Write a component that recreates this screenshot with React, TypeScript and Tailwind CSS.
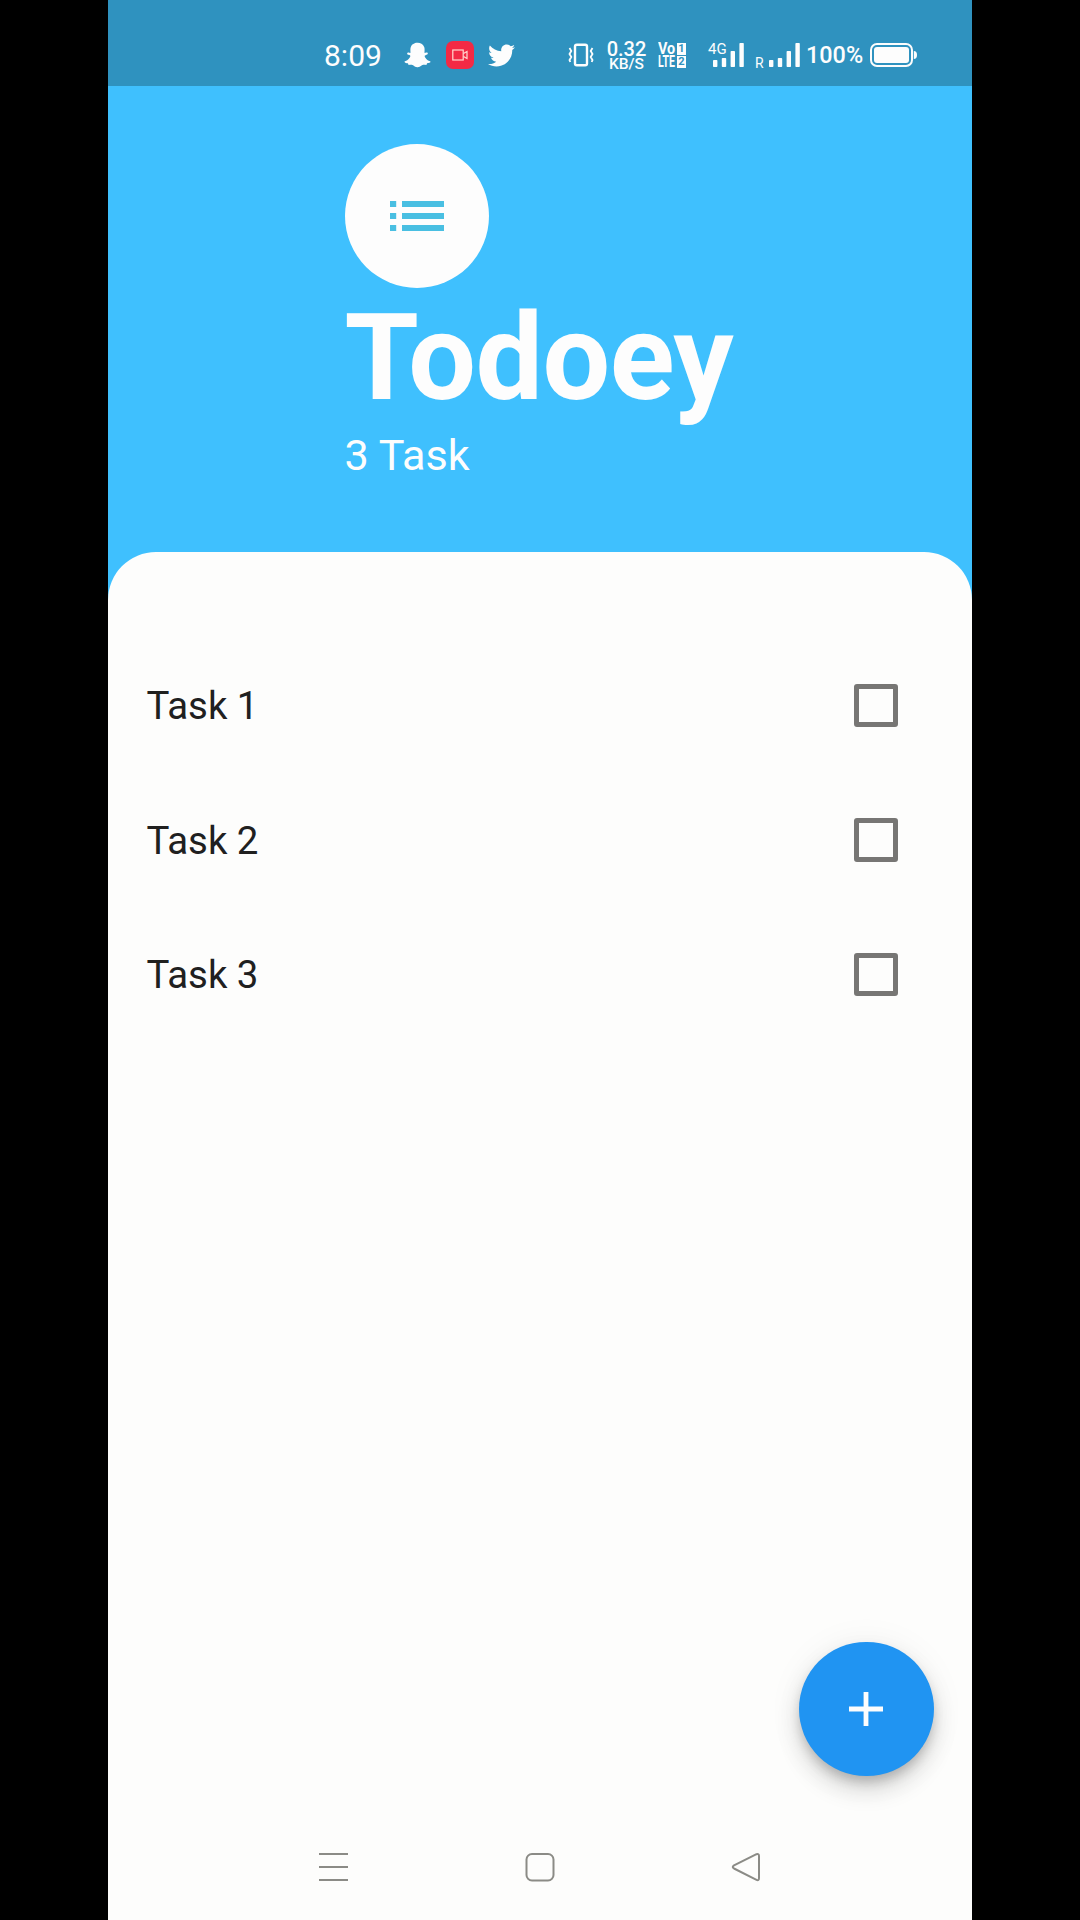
import { useState } from "react";
import { FaSnapchatGhost, FaTwitter } from "react-icons/fa";

const initialTasks = ["Task 1", "Task 2", "Task 3"];

function SignalBars() {
  return (
    <svg width="31" height="24" viewBox="0 0 31 24" fill="#fdfdfd" className="shrink-0">
      <rect x="0" y="17" width="4.4" height="7" rx="0.8" />
      <rect x="8.8" y="15" width="4.4" height="9" rx="0.8" />
      <rect x="17.6" y="8" width="4.4" height="16" rx="0.8" />
      <rect x="26.4" y="0" width="4.4" height="24" rx="0.8" />
    </svg>
  );
}

function StatusBar() {
  return (
    <div className="flex h-[86px] items-center bg-[#2f92bf] pt-[25px] pb-[1px] text-[#fdfdfd]">
      <span className="ml-[216px] w-[60px] shrink-0 whitespace-nowrap pt-[2px] text-[30px] leading-[30px]">8:09</span>
      <FaSnapchatGhost className="ml-[20px] h-[26px] w-[27px] shrink-0" />
      <div className="ml-[15px] flex size-[28px] shrink-0 items-center justify-center rounded-[7px] bg-[#f32a45]">
        <svg width="16" height="12" viewBox="0 0 16 12" fill="none" stroke="#ffd9d0" strokeWidth="1.2">
          <rect x="0.8" y="1" width="10.4" height="10" />
          <path d="M11.5 4.5 L15 2.5 V9.5 L11.5 7.5" />
        </svg>
      </div>
      <FaTwitter className="ml-[14px] size-[27px] shrink-0" />

      <svg width="26" height="24" viewBox="0 0 26 24" fill="none" stroke="#fdfdfd" className="ml-[53px] shrink-0">
        <rect x="7" y="1.8" width="12" height="20.4" rx="1.8" strokeWidth="2.4" />
        <path d="M1.5 5 L3.3 8 L1.5 11 L3.3 14 L1.5 17 L2.3 19 M24.5 5 L22.7 8 L24.5 11 L22.7 14 L24.5 17 L23.7 19" strokeWidth="1.8" />
      </svg>
      <div className="ml-[12px] flex w-[41px] shrink-0 flex-col items-center font-medium">
        <span className="text-[20px] leading-[17px]">0.32</span>
        <span className="text-[15.5px] leading-[12px]">KB/S</span>
      </div>
      <div className="ml-[11px] grid w-[29px] shrink-0 grid-cols-[19px_10px] items-center gap-y-[1px] pt-[1px] text-[16px] font-bold leading-[12px]">
        <span className="w-[18px] origin-left scale-x-90">Vo</span>
        <span className="flex h-[12px] w-[9px] items-center justify-center bg-[#fdfdfd] text-[11px] text-[#2f92bf]">1</span>
        <span className="w-[18px] origin-left scale-x-[0.66]">LTE</span>
        <span className="flex h-[12px] w-[9px] items-center justify-center bg-[#fdfdfd] text-[11px] text-[#2f92bf]">2</span>
      </div>
      <div className="relative ml-[26px] h-[24px] w-[31px] shrink-0">
        <SignalBars />
        <span className="absolute -top-[1px] -left-[5px] text-[15px] leading-[15px]">4G</span>
      </div>
      <span className="ml-[11px] w-[14px] shrink-0 pt-[15px] text-[14px] leading-[14px]">R</span>
      <SignalBars />
      <span className="ml-[6px] w-[59px] shrink-0 text-[23.4px] font-medium leading-[24px]">100%</span>
      <svg width="48" height="24" viewBox="0 0 48 24" className="ml-[5px] shrink-0">
        <rect x="1" y="1" width="41" height="22" rx="6" fill="none" stroke="#fdfdfd" strokeWidth="2" />
        <rect x="4" y="4" width="35" height="16" rx="3" fill="#fdfdfd" />
        <path d="M43.8 8 Q47 8 47 12 Q47 16 43.8 16 Z" fill="#fdfdfd" />
      </svg>
    </div>
  );
}

function Header({ count }: { count: number }) {
  return (
    <header className="h-[466px] pt-[58px] text-[#fdfdfd]">
      <div className="mx-auto w-[391px]">
        <div className="flex size-[144px] items-center justify-center rounded-full bg-[#fdfdfd]">
          <svg width="56" height="32" viewBox="0 0 56 32" fill="#49bfe2">
            <path d="M1 1h6.2v6H1zM13 1h42v6H13zM1 13h6.2v6H1zM13 13h42v6H13zM1 25h6.2v6H1zM13 25h42v6H13z" />
          </svg>
        </div>
        <h1 className="whitespace-nowrap text-[120px] font-bold leading-[140px] tracking-[-0.5px]">Todoey</h1>
        <p className="pt-[3px] text-[43.2px] leading-[50px]">{count} Task</p>
      </div>
    </header>
  );
}

function NavigationBar() {
  return (
    <nav className="flex h-[106px] items-center justify-between pr-[208px] pl-[208px]">
      <svg width="34" height="34" viewBox="0 0 34 34" fill="none" stroke="#8b8b86" strokeWidth="2">
        <path d="M3 4h29M3 17h29M3 30h29" />
      </svg>
      <svg width="34" height="34" viewBox="0 0 34 34" fill="none" stroke="#8b8b86" strokeWidth="2">
        <rect x="3.5" y="4" width="27" height="26.5" rx="5.5" />
      </svg>
      <svg width="34" height="34" viewBox="0 0 34 34" fill="none" stroke="#8b8b86" strokeWidth="2" strokeLinejoin="round">
        <path d="M4 15.3 L26.5 4.2 Q29 3.3 29 6 V28 Q29 31 26.5 29.8 L4 18.5 Q1.5 17 4 15.3 Z" />
      </svg>
    </nav>
  );
}

export default function App() {
  const [done, setDone] = useState<boolean[]>(initialTasks.map(() => false));
  const toggle = (index: number) => setDone(done.map((value, i) => (i === index ? !value : value)));

  return (
    <div className="flex h-[1920px] w-[1080px] justify-center bg-black font-[Roboto,sans-serif]">
      <div className="flex h-full w-[864px] flex-col overflow-hidden bg-[#3fc0fe]">
        <StatusBar />
        <Header count={initialTasks.length} />
        <main className="flex flex-1 flex-col rounded-t-[48px] bg-[#fdfdfc]">
          <ul className="pt-[86.4px]">
            {initialTasks.map((task, index) => (
              <li key={task} className="flex h-[134.4px] items-center justify-between pr-[74.4px] pl-[38.4px]">
                <span className="pt-[1.4px] text-[38.4px] leading-[46px] text-[#20201f]">{task}</span>
                <button
                  aria-label={task}
                  aria-pressed={done[index]}
                  onClick={() => toggle(index)}
                  className="size-[43.5px] rounded-[3px] border-[5px] border-[#777674]"
                />
              </li>
            ))}
          </ul>
          <button
            aria-label="Add task"
            className="mt-auto mr-[38.5px] mb-[38px] flex size-[134.5px] items-center justify-center self-end rounded-full bg-[#2094f2] shadow-[0_7px_12px_-2px_rgba(0,0,0,0.2),0_14px_24px_rgba(0,0,0,0.14),0_2px_36px_rgba(0,0,0,0.06)]"
          >
            <svg width="34" height="34" viewBox="0 0 34 34" fill="#fdfdfd">
              <path d="M14.6 0h4.8v14.6H34v4.8H19.4V34h-4.8V19.4H0v-4.8h14.6z" />
            </svg>
          </button>
          <NavigationBar />
        </main>
      </div>
    </div>
  );
}
